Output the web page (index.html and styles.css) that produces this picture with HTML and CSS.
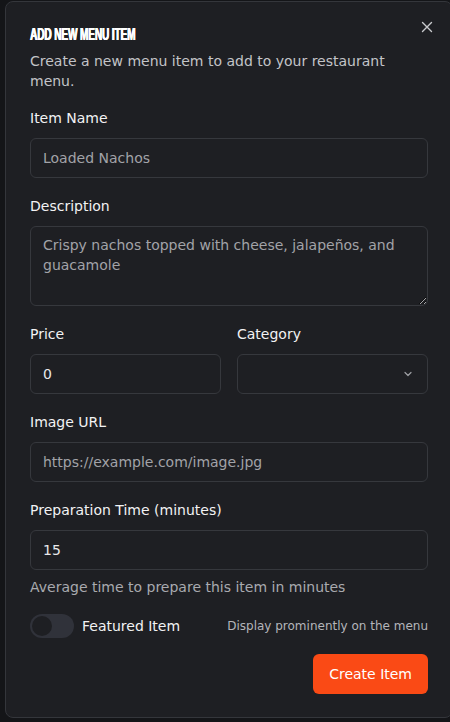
FILE: index.html
```html
<!DOCTYPE html>
<html>
<head>
<meta charset="utf-8">
<link rel="stylesheet" href="styles.css">
</head>
<body>
<div class="backdrop">
  <div class="modal">
    <button class="close" aria-label="Close">
      <svg width="12" height="12" viewBox="0 0 12 12"><path d="M1.5 1.5 L10.5 10.5 M10.5 1.5 L1.5 10.5" stroke="#c9cacd" stroke-width="1.4" stroke-linecap="round" fill="none"/></svg>
    </button>
    <header class="head">
      <h2 class="title"><span>ADD NEW MENU ITEM</span></h2>
      <p class="subtitle">Create a new menu item to add to your restaurant menu.</p>
    </header>
    <form class="form">
      <div class="field">
        <label class="label">Item Name</label>
        <input class="input" placeholder="Loaded Nachos">
      </div>
      <div class="field">
        <label class="label">Description</label>
        <textarea class="input textarea" placeholder="Crispy nachos topped with cheese, jalapeños, and guacamole"></textarea>
      </div>
      <div class="row">
        <div class="field">
          <label class="label">Price</label>
          <input class="input" value="0">
        </div>
        <div class="field">
          <label class="label">Category</label>
          <div class="input select">
            <svg width="12" height="12" viewBox="0 0 12 12"><path d="M3 4.5 L6 7.5 L9 4.5" stroke="#9fa0a5" stroke-width="1.2" fill="none" stroke-linecap="round" stroke-linejoin="round"/></svg>
          </div>
        </div>
      </div>
      <div class="field">
        <label class="label">Image URL</label>
        <input class="input" placeholder="https://example.com/image.jpg">
      </div>
      <div class="field">
        <label class="label">Preparation Time (minutes)</label>
        <input class="input" value="15">
        <p class="hint">Average time to prepare this item in minutes</p>
      </div>
      <div class="toggle-row">
        <div class="switch"><span class="knob"></span></div>
        <span class="toggle-label">Featured Item</span>
        <span class="toggle-hint">Display prominently on the menu</span>
      </div>
      <div class="actions">
        <button type="button" class="btn">Create Item</button>
      </div>
    </form>
  </div>
</div>
</body>
</html>
```
FILE: styles.css
```css
* { box-sizing: border-box; }
html, body { margin: 0; padding: 0; }
body {
  width: 450px;
  height: 722px;
  overflow: hidden;
  background: #141518;
  font-family: "DejaVu Sans", sans-serif;
  color: #f2f2f3;
}
.backdrop {
  padding: 1px 0 0 5px;
}
.modal {
  position: relative;
  width: 448px;
  height: 717px;
  background: #1e1f23;
  border: 1px solid #34363b;
  border-radius: 8px;
  padding: 24px 24px 0 24px;
}
.close {
  position: absolute;
  top: 18px;
  right: 18px;
  width: 14px;
  height: 14px;
  padding: 0;
  border: 0;
  background: transparent;
  display: flex;
  align-items: center;
  justify-content: center;
}
.head { margin-bottom: 17px; }
.title {
  margin: 0;
  height: 20px;
  font-family: "Liberation Sans Narrow", "Liberation Sans", sans-serif;
  font-weight: 700;
  font-size: 16px;
  line-height: 18px;
  color: #ffffff;
}
.title span {
  display: inline-block;
  transform: scaleX(0.63);
  transform-origin: left center;
  letter-spacing: -0.2px;
  text-shadow: 0.6px 0 0 #ffffff, -0.3px 0 0 #ffffff;
}
.subtitle {
  margin: 5px 0 0 0;
  font-size: 14px;
  line-height: 20px;
  color: #c3c4c8;
}
.form {
  display: flex;
  flex-direction: column;
  gap: 18px;
}
.field {
  display: flex;
  flex-direction: column;
  gap: 10px;
  min-width: 0;
}
.label {
  font-size: 14px;
  line-height: 20px;
  font-weight: 500;
  color: #f2f2f3;
}
.input {
  height: 40px;
  width: 100%;
  background: #1e1f23;
  border: 1px solid #36383d;
  border-radius: 6px;
  padding: 0 12px;
  font-family: inherit;
  font-size: 14px;
  color: #e8e8ea;
  outline: none;
}
.input::placeholder { color: #a2a3a8; }
.textarea {
  height: 80px;
  padding: 8px 12px;
  line-height: 20px;
  resize: vertical;
}
.row {
  display: grid;
  grid-template-columns: 1fr 1fr;
  gap: 16px;
}
.select {
  display: flex;
  align-items: center;
  justify-content: flex-end;
  padding-right: 13px;
}
.hint {
  margin: -3px 0 0 0;
  font-size: 14px;
  line-height: 20px;
  color: #a9aaaf;
}
.toggle-row {
  display: flex;
  align-items: center;
  margin-top: -1px;
}
.switch {
  width: 44px;
  height: 24px;
  border-radius: 12px;
  background: #30323a;
  padding: 2px;
  flex: none;
}
.knob {
  display: block;
  width: 20px;
  height: 20px;
  border-radius: 50%;
  background: #1e1f23;
}
.toggle-label {
  margin-left: 8px;
  font-size: 14px;
  font-weight: 500;
  color: #f2f2f3;
}
.toggle-hint {
  margin-left: auto;
  font-size: 12px;
  color: #b4b5ba;
}
.actions {
  display: flex;
  justify-content: flex-end;
  margin-top: -2px;
}
.btn {
  height: 40px;
  padding: 0 16px;
  background: #fa4a15;
  color: #ffffff;
  border: 0;
  border-radius: 6px;
  font-family: inherit;
  font-size: 14px;
  font-weight: 500;
}
```
